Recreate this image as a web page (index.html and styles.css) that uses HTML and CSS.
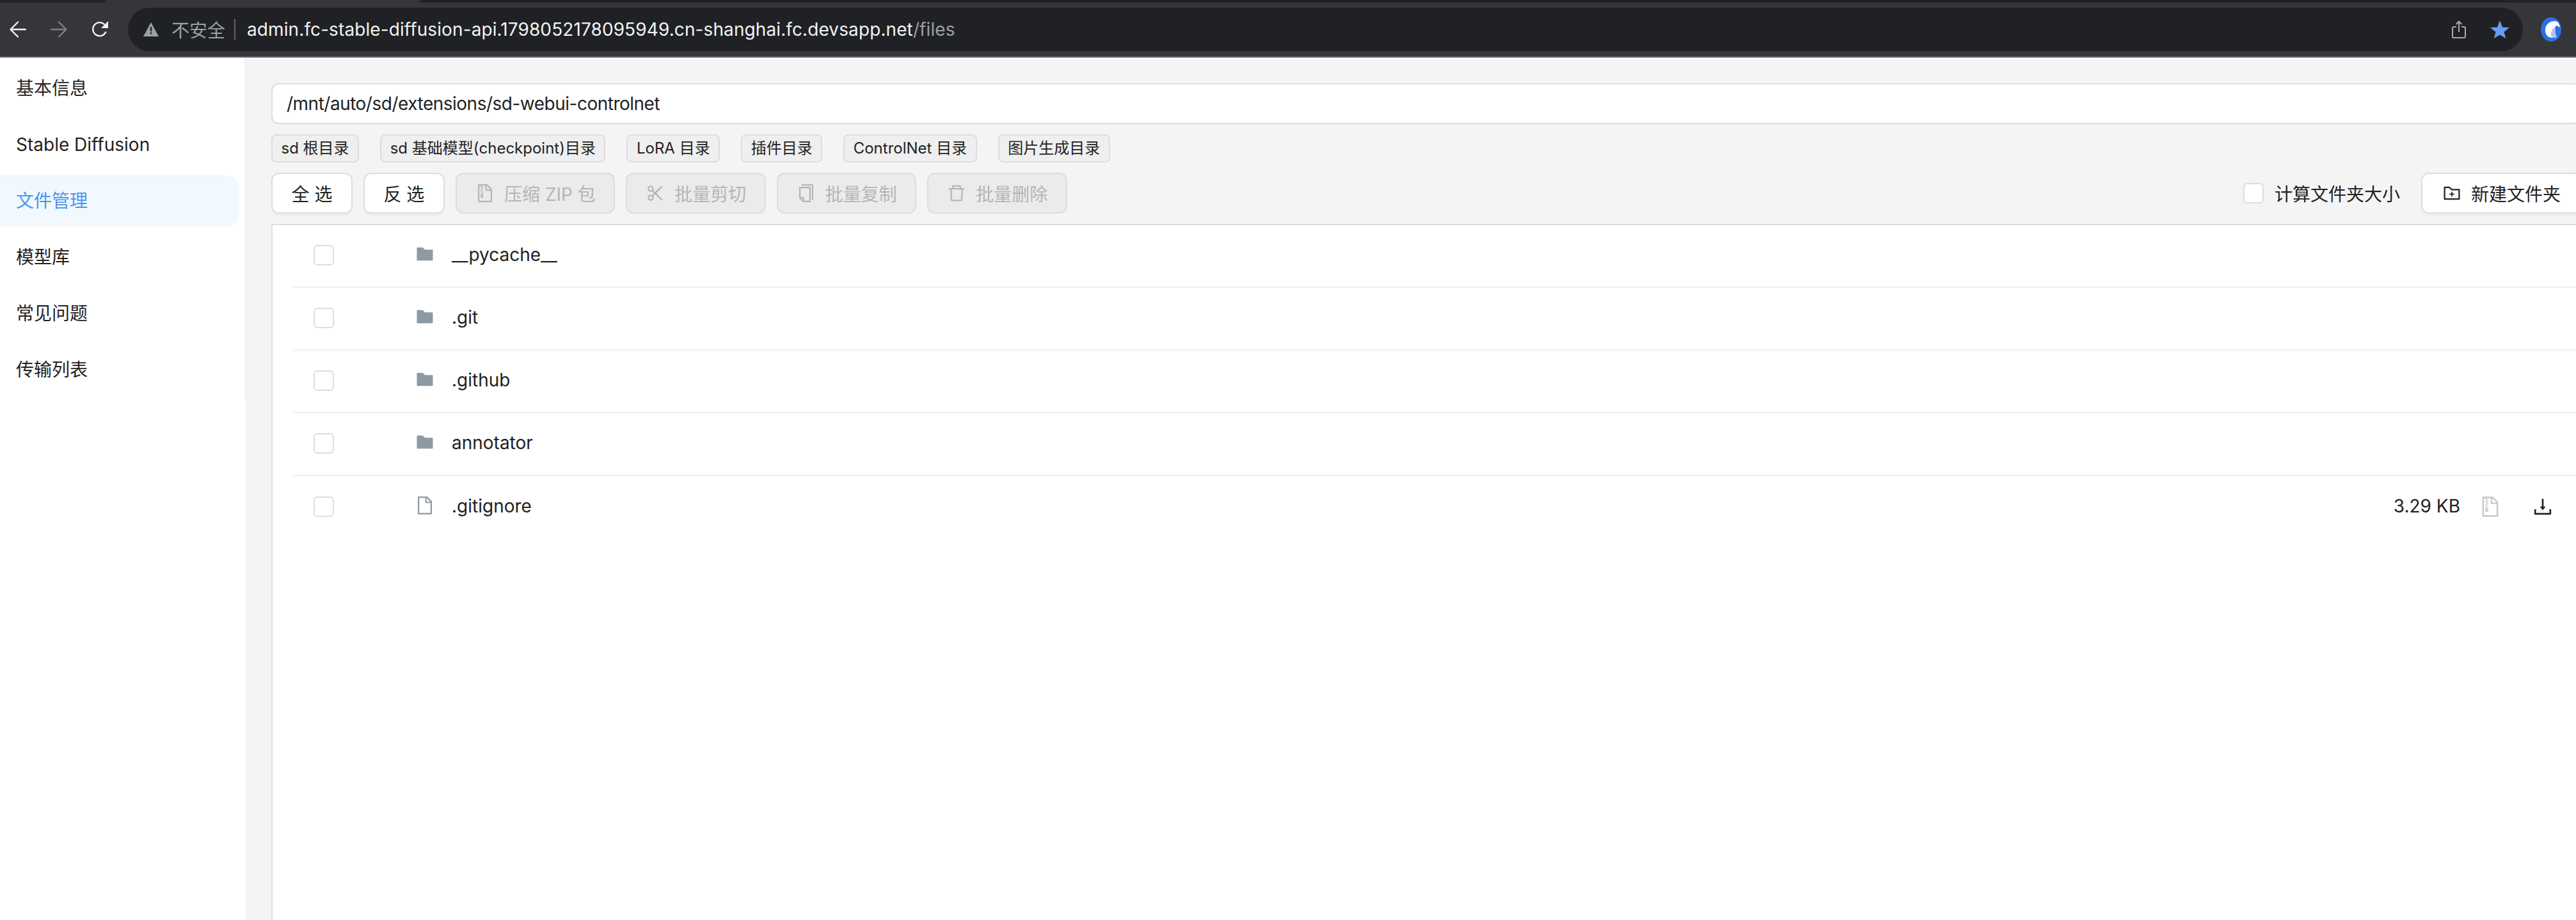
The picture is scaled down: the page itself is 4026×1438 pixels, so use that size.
FILE: index.html
```html
<!DOCTYPE html>
<html lang="zh-CN">
<head>
    <meta charset="UTF-8">
    <title>文件管理</title>
    <link rel="stylesheet" href="styles.css">
</head>
<body>
    <!-- icon sprite -->
    <svg class="sprite" xmlns="http://www.w3.org/2000/svg">
        <symbol id="i-folder" viewBox="0 0 1024 1024"><path d="M880 298.4H521L403.7 186.2a8.15 8.15 0 0 0-5.5-2.2H144c-17.7 0-32 14.3-32 32v592c0 17.7 14.3 32 32 32h736c17.7 0 32-14.3 32-32V330.4c0-17.7-14.3-32-32-32z"/></symbol>
        <symbol id="i-file" viewBox="0 0 1024 1024"><path d="M854.6 288.6L639.4 73.4c-6-6-14.1-9.4-22.6-9.4H192c-17.7 0-32 14.3-32 32v832c0 17.7 14.3 32 32 32h640c17.7 0 32-14.3 32-32V311.3c0-8.5-3.4-16.7-9.4-22.7zM790.2 326H602V137.8L790.2 326zm1.8 562H232V136h302v216a42 42 0 0 0 42 42h216v494z"/></symbol>
        <symbol id="i-zip" viewBox="0 0 1024 1024"><path d="M296 392h64v64h-64zm0 190v160h128V582h-64v-62h-64v62zm80 48v64h-32v-64h32zm-16-302h64v64h-64zm-64-64h64v64h-64zm64 192h64v64h-64zm0-256h64v64h-64zm494.6 88.6L639.4 73.4c-6-6-14.1-9.4-22.6-9.4H192c-17.7 0-32 14.3-32 32v832c0 17.7 14.3 32 32 32h640c17.7 0 32-14.3 32-32V311.3c0-8.5-3.4-16.7-9.4-22.7zM790.2 326H602V137.8L790.2 326zm1.8 562H232V136h64v64h64v-64h174v216a42 42 0 0 0 42 42h216v494z"/></symbol>
        <symbol id="i-scissor" viewBox="0 0 1024 1024"><path d="M567.1 512l318.5-319.3c5-5 1.5-13.7-5.6-13.7h-90.5c-2.1 0-4.2.8-5.6 2.3l-273.3 274-90.2-90.5c12.5-22.1 19.7-47.6 19.7-74.8 0-83.9-68.1-152-152-152s-152 68.1-152 152 68.1 152 152 152c27.7 0 53.6-7.4 75.9-20.3l90 90.3-90.1 90.3A151.04 151.04 0 0 0 288 582c-83.9 0-152 68.1-152 152s68.1 152 152 152 152-68.1 152-152c0-27.2-7.2-52.7-19.7-74.8l90.2-90.5 273.3 274c1.5 1.5 3.5 2.3 5.6 2.3H880c7.1 0 10.7-8.6 5.6-13.7L567.1 512zM288 370c-44.1 0-80-35.9-80-80s35.9-80 80-80 80 35.9 80 80-35.9 80-80 80zm0 444c-44.1 0-80-35.9-80-80s35.9-80 80-80 80 35.9 80 80-35.9 80-80 80z"/></symbol>
        <symbol id="i-copy" viewBox="0 0 1024 1024"><path d="M832 64H296c-4.4 0-8 3.6-8 8v56c0 4.4 3.6 8 8 8h496v688c0 4.4 3.6 8 8 8h56c4.4 0 8-3.6 8-8V96c0-17.7-14.3-32-32-32zM704 192H192c-17.7 0-32 14.3-32 32v530.7c0 8.5 3.4 16.6 9.4 22.6l173.3 173.3c2.2 2.2 4.7 4 7.4 5.5v1.9h4.2c3.5 1.3 7.2 2 11 2H704c17.7 0 32-14.3 32-32V224c0-17.7-14.3-32-32-32zM350 856.2L263.9 770H350v86.2zM664 888H414V746c0-22.1-17.9-40-40-40H232V264h432v624z"/></symbol>
        <symbol id="i-delete" viewBox="0 0 1024 1024"><path d="M360 184h-8c4.4 0 8-3.6 8-8v8h304v-8c0 4.4 3.6 8 8 8h-8v72h72v-80c0-35.3-28.7-64-64-64H352c-35.3 0-64 28.7-64 64v80h72v-72zm504 72H160c-17.7 0-32 14.3-32 32v32c0 4.4 3.6 8 8 8h60.4l24.7 523c1.6 34.1 29.8 61 63.9 61h454c34.2 0 62.3-26.8 63.9-61l24.7-523H888c4.4 0 8-3.6 8-8v-32c0-17.7-14.3-32-32-32zM731.3 840H292.7l-24.2-512h487l-24.2 512z"/></symbol>
        <symbol id="i-folder-add" viewBox="0 0 1024 1024"><path d="M484 443.1V528h-84.5c-4.1 0-7.5 3.1-7.5 7v42c0 3.8 3.4 7 7.5 7H484v84.9c0 3.9 3.2 7.1 7 7.1h42c3.9 0 7-3.2 7-7.1V584h84.5c4.1 0 7.5-3.2 7.5-7v-42c0-3.9-3.4-7-7.5-7H540v-84.9c0-3.9-3.1-7.1-7-7.1h-42c-3.8 0-7 3.2-7 7.1zm396-144.7H521L403.7 186.2a8.15 8.15 0 0 0-5.5-2.2H144c-17.7 0-32 14.3-32 32v592c0 17.7 14.3 32 32 32h736c17.7 0 32-14.3 32-32V330.4c0-17.7-14.3-32-32-32zM840 768H184V256h188.5l119.6 114.4H840V768z"/></symbol>
        <symbol id="i-download" viewBox="0 0 1024 1024"><path d="M505.7 661a8 8 0 0 0 12.6 0l112-141.7c4.1-5.2.4-12.9-6.3-12.9h-74.1V168c0-4.4-3.6-8-8-8h-60c-4.4 0-8 3.6-8 8v338.3H400c-6.7 0-10.4 7.7-6.3 12.9l112 141.8zM878 626h-60c-4.4 0-8 3.6-8 8v154H214V634c0-4.4-3.6-8-8-8h-60c-4.4 0-8 3.6-8 8v198c0 17.7 14.3 32 32 32h684c17.7 0 32-14.3 32-32V634c0-4.4-3.6-8-8-8z"/></symbol>
    </svg>

    <div class="page">
        <div class="tabstrip">
            <div class="tab-active"></div>
        </div>

        <div class="browser-bar">
            <div class="nav-btns">
                <svg class="nav-icon" viewBox="0 0 26 26" fill="none" stroke="#f1f3f4" stroke-width="2.4" stroke-linecap="round" stroke-linejoin="round"><path d="M25 13H2M13 1.5L1.5 13L13 24.5"/></svg>
                <svg class="nav-icon" viewBox="0 0 26 26" fill="none" stroke="#7f8083" stroke-width="2.4" stroke-linecap="round" stroke-linejoin="round"><path d="M1 13H24M13 1.5L24.5 13L13 24.5"/></svg>
                <svg class="nav-icon" viewBox="0 0 26 26"><path d="M22.5 16.5A10.5 10.5 0 1 1 20.5 5.500" fill="none" stroke="#f1f3f4" stroke-width="2.4"/><path d="M26 0V11H15z" fill="#f1f3f4"/></svg>
            </div>
            <div class="address">
                <svg class="warn-icon" viewBox="0 0 24 22"><path d="M12 0L24 22H0z" fill="#9aa0a6"/><path d="M10.8 7h2.4v7h-2.4zM10.8 15.6h2.4v2.6h-2.4z" fill="#202124"/></svg>
                <span class="not-secure">不安全</span>
                <span class="addr-sep"></span>
                <span class="url">admin.fc-stable-diffusion-api.1798052178095949.cn-shanghai.fc.devsapp.net<span class="url-path">/files</span></span>
                <svg class="share-icon" viewBox="0 0 22 28" fill="none" stroke="#a9abae" stroke-width="2"><path d="M7 10H3a2 2 0 0 0-2 2v13a2 2 0 0 0 2 2h16a2 2 0 0 0 2-2V12a2 2 0 0 0-2-2h-4M11 18V2M6.500 6L11 1.500L15.500 6"/></svg>
                <svg class="star-icon" viewBox="0 0 30 28"><path d="M15 0L19 10.400L30 11L21.500 18L24.400 28L15 22.400L5.600 28L8.500 18L0 11L11 10.400z" fill="#6c9cf0"/></svg>
            </div>
            <svg class="avatar" viewBox="0 0 32 38"><ellipse cx="16" cy="19" rx="16" ry="19" fill="#2e6fe3"/><path d="M7 22C6 13 12 6 22 6C27 6 29 10 30 16L25 13C20 15 17 24 19 32C12 32 8 29 7 22z" fill="#fff"/><path d="M16 30C15 23 18 17 23 15C22 21 23 27 25 31C22 33 19 32 16 30z" fill="#a9c7f5"/></svg>
        </div>

        <div class="app">
            <aside class="sidebar">
                <nav class="side-nav">
                    <a class="side-item">基本信息</a>
                    <a class="side-item">Stable Diffusion</a>
                    <a class="side-item active">文件管理</a>
                    <a class="side-item">模型库</a>
                    <a class="side-item">常见问题</a>
                    <a class="side-item">传输列表</a>
                </nav>
            </aside>

            <main class="content">
                <div class="path-input">/mnt/auto/sd/extensions/sd-webui-controlnet</div>

                <div class="tags">
                    <span class="tag">sd 根目录</span>
                    <span class="tag">sd 基础模型(checkpoint)目录</span>
                    <span class="tag">LoRA 目录</span>
                    <span class="tag">插件目录</span>
                    <span class="tag">ControlNet 目录</span>
                    <span class="tag">图片生成目录</span>
                </div>

                <div class="toolbar">
                    <button class="btn btn-pick">全 选</button>
                    <button class="btn btn-pick">反 选</button>
                    <button class="btn" disabled><svg class="btn-icon"><use href="#i-zip"/></svg>压缩 ZIP 包</button>
                    <button class="btn" disabled><svg class="btn-icon"><use href="#i-scissor"/></svg>批量剪切</button>
                    <button class="btn" disabled><svg class="btn-icon"><use href="#i-copy"/></svg>批量复制</button>
                    <button class="btn" disabled><svg class="btn-icon"><use href="#i-delete"/></svg>批量删除</button>
                    <label class="calc-size"><span class="check"></span>计算文件夹大小</label>
                    <button class="btn btn-new"><svg class="btn-icon"><use href="#i-folder-add"/></svg>新建文件夹</button>
                </div>

                <div class="file-table">
                    <div class="file-row">
                        <span class="check"></span>
                        <svg class="file-icon"><use href="#i-folder"/></svg>
                        <span class="file-name">__pycache__</span>
                    </div>
                    <div class="file-row">
                        <span class="check"></span>
                        <svg class="file-icon"><use href="#i-folder"/></svg>
                        <span class="file-name">.git</span>
                    </div>
                    <div class="file-row">
                        <span class="check"></span>
                        <svg class="file-icon"><use href="#i-folder"/></svg>
                        <span class="file-name">.github</span>
                    </div>
                    <div class="file-row">
                        <span class="check"></span>
                        <svg class="file-icon"><use href="#i-folder"/></svg>
                        <span class="file-name">annotator</span>
                    </div>
                    <div class="file-row">
                        <span class="check"></span>
                        <svg class="file-icon"><use href="#i-file"/></svg>
                        <span class="file-name">.gitignore</span>
                        <span class="file-size">3.29 KB</span>
                        <svg class="row-icon zip"><use href="#i-zip"/></svg>
                        <svg class="row-icon down"><use href="#i-download"/></svg>
                    </div>
                </div>
            </main>
        </div>
    </div>
</body>
</html>
```

FILE: styles.css
```css
* {
    margin: 0;
    padding: 0;
    box-sizing: border-box;
}

html, body {
    height: 100%;
    overflow: hidden;
    background: #fff;
}

body {
    font-family: Inter, "Noto Sans CJK SC", sans-serif;
    font-size: 28px;
    color: #222;
}

.sprite {
    position: absolute;
    width: 0;
    height: 0;
}

/* the page runs a little past the right edge of the window */
.page {
    width: 4050px;
    height: 1438px;
    display: flex;
    flex-direction: column;
}

/* browser chrome */
.tabstrip {
    height: 4px;
    background: #202124;
    padding-left: 165px;
}

.tab-active {
    width: 492px;
    height: 4px;
    background: #35363a;
}

.browser-bar {
    height: 86px;
    background: #35363a;
    border-bottom: 2px solid #5f6063;
    display: flex;
    align-items: center;
    padding: 0 0 0 15px;
    width: 4026px;
}

.nav-btns {
    display: flex;
    gap: 38px;
    width: 185px;
}

.nav-icon {
    width: 26px;
    height: 26px;
}

.address {
    width: 3743px;
    height: 68px;
    border-radius: 34px;
    background: #202124;
    display: flex;
    align-items: center;
    padding-left: 24px;
}

.warn-icon {
    width: 24px;
    height: 22px;
}

.not-secure {
    margin-left: 20px;
    color: #9aa0a6;
    font-size: 28px;
}

.addr-sep {
    width: 2px;
    height: 32px;
    background: #5f6368;
    margin: 0 18px 0 14px;
}

.url {
    color: #f1f3f4;
    font-size: 28px;
    letter-spacing: 0.1px;
    flex: 1;
}

.url-path {
    color: #9aa0a6;
}

.share-icon {
    width: 22px;
    height: 28px;
}

.star-icon {
    width: 30px;
    height: 28px;
    margin: 0 21px 0 38px;
}

.avatar {
    width: 32px;
    height: 38px;
    margin-left: 28px;
}

/* app */
.app {
    flex: 1;
    display: flex;
    min-height: 0;
}

.sidebar {
    width: 384px;
    flex-shrink: 0;
}

.side-nav {
    height: 536px;
    padding: 8px 8px 0 0;
    border-right: 2px solid #f4f4f4;
    display: flex;
    flex-direction: column;
    gap: 8px;
}

.side-item {
    height: 80px;
    line-height: 80px;
    padding-left: 25px;
    border-radius: 0 20px 20px 0;
}

.side-item.active {
    background: #f1f8fe;
    color: #4a96ec;
}

.content {
    flex: 1;
    background: #f4f4f4;
    padding: 40px 16px 0 40px;
    display: flex;
    flex-direction: column;
    gap: 16px;
}

.path-input {
    height: 64px;
    line-height: 60px;
    padding-left: 22px;
    background: #fff;
    border: 2px solid #ddd;
    border-radius: 12px;
    letter-spacing: -0.5px;
}

.tags {
    display: flex;
    gap: 33px;
}

.tag {
    height: 44px;
    line-height: 40px;
    padding: 0 13.5px;
    font-size: 24px;
    background: #efefef;
    border: 2px solid #ddd;
    border-radius: 8px;
}

.toolbar {
    display: flex;
    align-items: center;
    gap: 17px;
}

.btn {
    height: 64px;
    padding: 0 28.25px;
    display: flex;
    align-items: center;
    gap: 14px;
    font-family: inherit;
    font-size: 28px;
    color: #222;
    background: #fff;
    border: 2px solid #ddd;
    border-radius: 12px;
    box-shadow: 0 4px 0 rgba(0, 0, 0, 0.02);
}

.btn-pick {
    padding: 0 29.5px;
}

.btn-new {
    padding: 0 30px;
}

.btn:disabled {
    color: #b5b5b5;
    background: #ebebeb;
    box-shadow: none;
}

.btn-icon {
    width: 32px;
    height: 32px;
    fill: currentColor;
}

.calc-size {
    margin-left: auto;
    display: flex;
    align-items: center;
    gap: 17px;
    margin-right: 16px;
}

.check {
    width: 32px;
    height: 32px;
    background: #fff;
    border: 2px solid #ddd;
    border-radius: 6px;
    flex-shrink: 0;
}

/* file list */
.file-table {
    flex: 1;
    background: #fff;
    border-top: 2px solid #ddd;
    border-left: 2px solid #ddd;
    padding-left: 32px;
}

.file-row {
    height: 98px;
    padding: 0 42px 2px 32px;
    border-bottom: 2px solid #f0f0f0;
    display: flex;
    align-items: center;
}

.file-row:last-child {
    border-bottom: none;
}

.file-icon {
    width: 32px;
    height: 32px;
    margin: 0 26px 4px 126px;
    fill: #8c9aa5;
}

.file-name {
    margin-bottom: 2px;
}

.file-size {
    margin-left: auto;
    margin-bottom: 2px;
}

.row-icon {
    width: 36px;
    height: 36px;
}

.row-icon.zip {
    fill: #c8c8c8;
    margin-left: 29px;
}

.row-icon.down {
    fill: #222;
    margin-left: 46px;
}
```
